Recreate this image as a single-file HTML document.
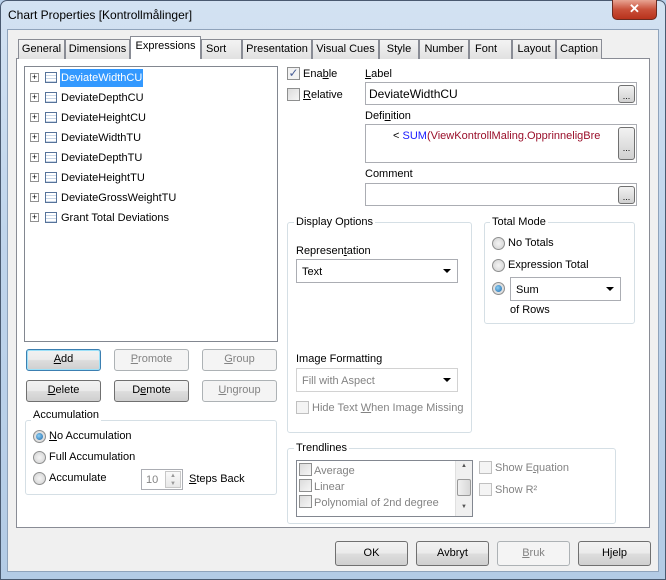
<!DOCTYPE html>
<html><head><style>
*{box-sizing:border-box;margin:0;padding:0}
body{width:666px;height:580px;overflow:hidden;font-family:"Liberation Sans",sans-serif;font-size:11px;color:#000;background:#b9d1ea;position:relative;white-space:nowrap}
.a{position:absolute}
.frame{left:0;top:0;width:666px;height:580px;background:linear-gradient(180deg,#d3e2f2 0%,#c0d5ec 40%,#b3cbe5 100%);border:1px solid #4a5a70;border-radius:7px 7px 0 0}
.client{left:7px;top:29px;width:652px;height:543px;background:#f0f0f0;border:1px solid #8fa3bb}
.panel{left:16px;top:58px;width:634px;height:470px;background:#fff;border:1px solid #898c95}
.tab{top:39px;height:20px;background:linear-gradient(#f3f3f3,#e1e1e1);border:1px solid #898c95;border-bottom:none;padding:3px 0 0;font-size:11px;text-align:center}
.tab.sel{top:36px;height:23px;background:#fff;z-index:2}
.box{border:1px solid #abadb3;background:#fff}
.btn{border:1px solid #707070;border-radius:3px;background:linear-gradient(#f2f2f2 0%,#ebebeb 48%,#dddddd 52%,#cfcfcf 100%);text-align:center;line-height:19px}
.btn.dis{border-color:#adb2b5;background:#f4f4f4;color:#838383}
.grp{border:1px solid #d5dfe5;border-radius:3px}
.leg{background:#fff;padding:0 2px}
.cb{width:13px;height:13px;border:1px solid #8e8f8f;background:linear-gradient(135deg,#dcdcdc,#f6f6f6)}
.rb{width:13px;height:13px;border:1px solid #8e8f8f;border-radius:50%;background:radial-gradient(circle,#f4f4f4,#d0d0d0)}
.rb.on::after{content:"";position:absolute;left:2px;top:2px;width:7px;height:7px;border-radius:50%;background:radial-gradient(circle at 40% 40%,#8fd0f5,#1865a8)}
.dots{width:17px;height:18px;border:1px solid #707070;border-radius:3px;background:linear-gradient(#f2f2f2,#d0d0d0);font-size:9px;text-align:center;line-height:20px}
.plus{width:9px;height:9px;border:1px solid #919191;background:#fff;font-size:9px;line-height:7px;text-align:center}
.tbl{width:12px;height:11px;border:1px solid #56739a;background:repeating-linear-gradient(0deg,#c9d7e8 0 1px,#fff 1px 3px)}
.dd::after{content:"";position:absolute;right:6px;top:9px;border:4px solid transparent;border-top:4px solid #000;border-bottom:none}
u{text-decoration:underline}
.gray{color:#838383}
</style></head><body>
<div class="a frame"></div>
<div class="a" style="left:8px;top:8px;font-size:12px;color:#000">Chart Properties [Kontrollmålinger]</div>
<div class="a" style="left:612px;top:0;width:45px;height:20px;border:1px solid #6b2a20;border-top:none;border-radius:0 0 5px 5px;background:linear-gradient(#e8a493,#c9503a 50%,#b8321c);color:#fff;font-weight:bold;text-align:center;font-size:13px;line-height:18px">✕</div>
<div class="a client"></div>
<div class="a panel"></div>
<div class="a tab" style="left:18px;width:47px">General</div>
<div class="a tab" style="left:65px;width:65px">Dimensions</div>
<div class="a tab sel" style="left:130px;width:71px">Expressions</div>
<div class="a tab" style="left:201px;width:41px;text-align:left;padding-left:4px">Sort</div>
<div class="a tab" style="left:242px;width:70px">Presentation</div>
<div class="a tab" style="left:312px;width:67px">Visual Cues</div>
<div class="a tab" style="left:379px;width:40px">Style</div>
<div class="a tab" style="left:419px;width:50px">Number</div>
<div class="a tab" style="left:469px;width:43px;text-align:left;padding-left:5px">Font</div>
<div class="a tab" style="left:512px;width:44px">Layout</div>
<div class="a tab" style="left:556px;width:46px">Caption</div>

<div class="a box" style="left:24px;top:66px;width:254px;height:276px;border-color:#828790"></div>
<div class="a" style="left:30px;top:72px">
<div style="position:relative;height:20px"><div class="a plus" style="left:0;top:1px">+</div><div class="a tbl" style="left:15px;top:0"></div><div class="a" style="left:30px;top:-3px;background:#3399ff;color:#fff;padding:3px 1px;height:18px">DeviateWidthCU</div></div>
<div style="position:relative;height:20px"><div class="a plus" style="left:0;top:1px">+</div><div class="a tbl" style="left:15px;top:0"></div><div class="a" style="left:31px;top:0">DeviateDepthCU</div></div>
<div style="position:relative;height:20px"><div class="a plus" style="left:0;top:1px">+</div><div class="a tbl" style="left:15px;top:0"></div><div class="a" style="left:31px;top:0">DeviateHeightCU</div></div>
<div style="position:relative;height:20px"><div class="a plus" style="left:0;top:1px">+</div><div class="a tbl" style="left:15px;top:0"></div><div class="a" style="left:31px;top:0">DeviateWidthTU</div></div>
<div style="position:relative;height:20px"><div class="a plus" style="left:0;top:1px">+</div><div class="a tbl" style="left:15px;top:0"></div><div class="a" style="left:31px;top:0">DeviateDepthTU</div></div>
<div style="position:relative;height:20px"><div class="a plus" style="left:0;top:1px">+</div><div class="a tbl" style="left:15px;top:0"></div><div class="a" style="left:31px;top:0">DeviateHeightTU</div></div>
<div style="position:relative;height:20px"><div class="a plus" style="left:0;top:1px">+</div><div class="a tbl" style="left:15px;top:0"></div><div class="a" style="left:31px;top:0">DeviateGrossWeightTU</div></div>
<div style="position:relative;height:20px"><div class="a plus" style="left:0;top:1px">+</div><div class="a tbl" style="left:15px;top:0"></div><div class="a" style="left:31px;top:0">Grant Total Deviations</div></div>
</div>

<div class="a btn" style="left:26px;top:349px;width:75px;height:22px;border-color:#3c7fb1;box-shadow:inset 0 0 0 1px #9ce0f8"><u>A</u>dd</div>
<div class="a btn dis" style="left:114px;top:349px;width:75px;height:22px"><u>P</u>romote</div>
<div class="a btn dis" style="left:202px;top:349px;width:75px;height:22px"><u>G</u>roup</div>
<div class="a btn" style="left:26px;top:380px;width:75px;height:22px"><u>D</u>elete</div>
<div class="a btn" style="left:114px;top:380px;width:75px;height:22px">D<u>e</u>mote</div>
<div class="a btn dis" style="left:202px;top:380px;width:75px;height:22px"><u>U</u>ngroup</div>

<div class="a grp" style="left:25px;top:420px;width:252px;height:75px"></div>
<div class="a leg" style="left:31px;top:409px">Accumulation</div>
<div class="a rb on" style="left:33px;top:430px"></div><div class="a" style="left:49px;top:430px"><u>N</u>o Accumulation</div>
<div class="a rb" style="left:33px;top:451px"></div><div class="a" style="left:49px;top:451px">Full Accumulation</div>
<div class="a rb" style="left:33px;top:472px"></div><div class="a" style="left:49px;top:472px">Accumulate</div>
<div class="a box" style="left:141px;top:469px;width:42px;height:21px;padding:4px 0 0 4px;color:#838383">10</div>
<div class="a" style="left:165px;top:471px;width:16px;height:17px;border:1px solid #c8c8c8;background:linear-gradient(#fafafa,#e8e8e8);font-size:6px;color:#999;text-align:center;line-height:8px">▲<br>▼</div>
<div class="a" style="left:189px;top:473px"><u>S</u>teps Back</div>

<div class="a cb" style="left:287px;top:67px;background:#f2f2f2;color:#4a5f97;font-size:12px;line-height:11px;text-align:center">✓</div>
<div class="a" style="left:303px;top:68px">Ena<u>b</u>le</div>
<div class="a cb" style="left:287px;top:88px"></div>
<div class="a" style="left:303px;top:89px"><u>R</u>elative</div>

<div class="a" style="left:365px;top:68px"><u>L</u>abel</div>
<div class="a box" style="left:365px;top:82px;width:272px;height:23px;font-size:12px;padding:4px 0 0 3px">DeviateWidthCU</div>
<div class="a dots" style="left:618px;top:85px">...</div>
<div class="a" style="left:365px;top:110px">Defi<u>n</u>ition</div>
<div class="a box" style="left:365px;top:124px;width:272px;height:39px;padding:5px 0 0 27px;overflow:hidden">&lt; <span style="color:#1a1aff">SUM</span><span style="color:#9a0f2a">(ViewKontrollMaling.OpprinneligBre</span></div>
<div class="a dots" style="left:618px;top:127px;height:33px;line-height:40px">...</div>
<div class="a" style="left:365px;top:168px">Comment</div>
<div class="a box" style="left:365px;top:183px;width:272px;height:23px"></div>
<div class="a dots" style="left:618px;top:186px">...</div>

<div class="a grp" style="left:287px;top:222px;width:185px;height:211px"></div>
<div class="a leg" style="left:294px;top:216px">Display Options</div>
<div class="a" style="left:296px;top:245px">Represen<u>t</u>ation</div>
<div class="a box dd" style="left:296px;top:259px;width:162px;height:24px;padding:6px 0 0 5px">Text</div>
<div class="a" style="left:296px;top:353px">Image Formatting</div>
<div class="a box dd gray" style="left:296px;top:368px;width:162px;height:24px;padding:6px 0 0 5px;border-color:#d2d2d2">Fill with Aspect</div>
<div class="a cb" style="left:296px;top:401px;border-color:#c0c0c0;background:#f4f4f4"></div>
<div class="a gray" style="left:312px;top:402px">Hide Text <u>W</u>hen Image Missing</div>

<div class="a grp" style="left:484px;top:222px;width:151px;height:102px"></div>
<div class="a leg" style="left:490px;top:216px">Total Mode</div>
<div class="a rb" style="left:492px;top:237px"></div><div class="a" style="left:508px;top:237px">No Totals</div>
<div class="a rb" style="left:492px;top:259px"></div><div class="a" style="left:508px;top:259px">Expression Total</div>
<div class="a rb on" style="left:492px;top:282px"></div>
<div class="a box dd" style="left:510px;top:277px;width:111px;height:24px;padding:6px 0 0 5px">Sum</div>
<div class="a" style="left:510px;top:304px">of Rows</div>

<div class="a grp" style="left:287px;top:448px;width:329px;height:76px"></div>
<div class="a leg" style="left:294px;top:442px">Trendlines</div>
<div class="a box" style="left:296px;top:460px;width:177px;height:57px;border-color:#828790;overflow:hidden"></div>
<div class="a gray" style="left:299px;top:463px;line-height:16px">
<div><span class="cb" style="display:inline-block;vertical-align:-2px;margin-right:2px"></span>Average</div>
<div><span class="cb" style="display:inline-block;vertical-align:-2px;margin-right:2px"></span>Linear</div>
<div><span class="cb" style="display:inline-block;vertical-align:-2px;margin-right:2px"></span>Polynomial of 2nd degree</div>
</div>
<div class="a" style="left:455px;top:461px;width:17px;height:55px;background:#f0f0f0;border-left:1px solid #e0e0e0;font-size:6px;color:#555;text-align:center;line-height:10px">▲<div style="margin:8px 1px 6px;height:17px;border:1px solid #999;border-radius:2px;background:linear-gradient(90deg,#f0f0f0,#d8d8d8)"></div>▼</div>
<div class="a cb" style="left:479px;top:461px;border-color:#c0c0c0;background:#f4f4f4"></div>
<div class="a gray" style="left:495px;top:462px">Show E<u>q</u>uation</div>
<div class="a cb" style="left:479px;top:483px;border-color:#c0c0c0;background:#f4f4f4"></div>
<div class="a gray" style="left:495px;top:484px">Show R²</div>

<div class="a btn" style="left:335px;top:541px;width:73px;height:25px;line-height:23px">OK</div>
<div class="a btn" style="left:416px;top:541px;width:73px;height:25px;line-height:23px">Avbryt</div>
<div class="a btn dis" style="left:497px;top:541px;width:73px;height:25px;line-height:23px"><u>B</u>ruk</div>
<div class="a btn" style="left:578px;top:541px;width:73px;height:25px;line-height:23px">Hjelp</div>
</body></html>
